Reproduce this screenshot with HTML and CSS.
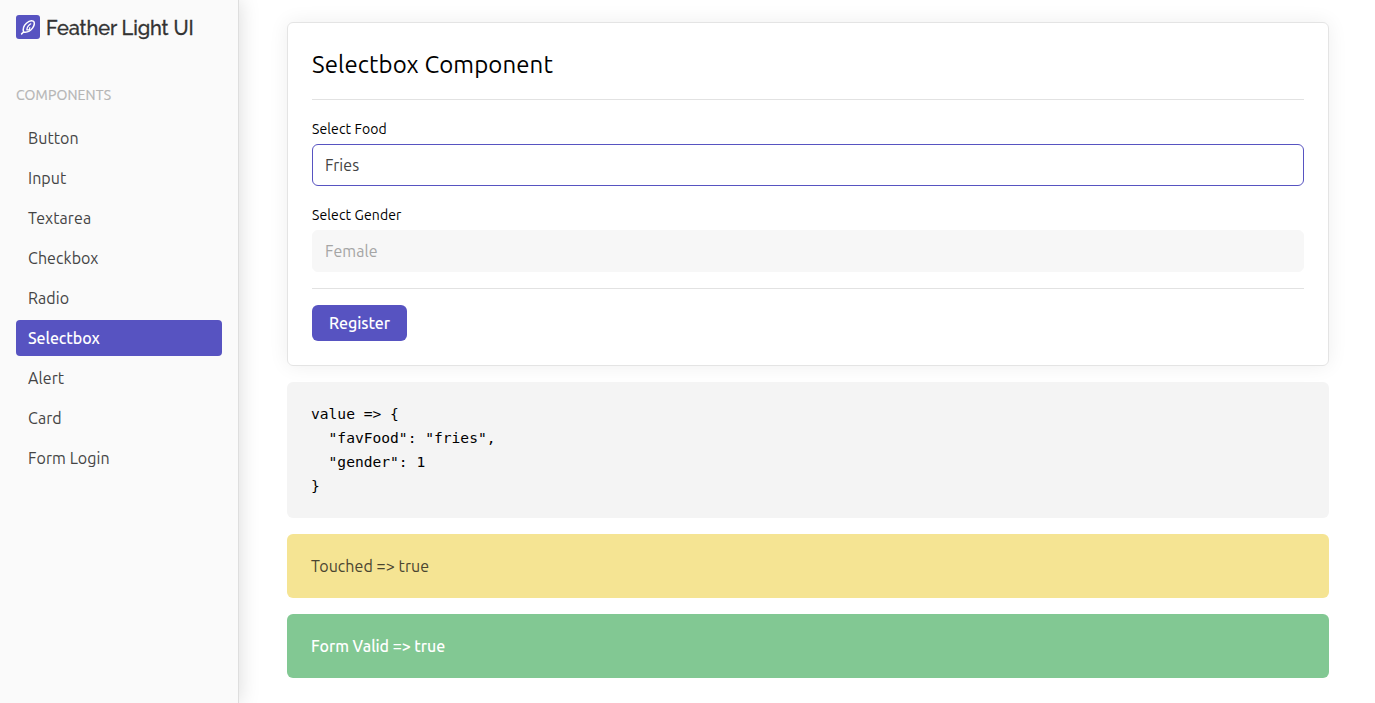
FILE: index.html
```html
<!DOCTYPE html>
<html lang="en">
<head>
<meta charset="utf-8">
<title>Feather Light UI</title>
<link rel="stylesheet" href="styles.css">
</head>
<body>
<div class="app">
  <aside class="sidebar">
    <div class="brand">
      <span class="brand-mark">
        <svg width="24" height="24" viewBox="0 0 24 24" fill="none" stroke="#fff" stroke-width="1.5" stroke-linecap="round" stroke-linejoin="round">
          <path d="M5.6 18.9 7.8 16.8M7.6 17C6.6 13.6 7.8 10.6 10.4 8.2 12.6 6.2 15.4 5.2 17.2 6.1c1.8 1 1.4 4.2-.5 6.8-2.2 3-5.4 4.7-9.1 4.1"/>
          <path stroke-width="1.2" d="M14.8 8.8c-2.4 1.5-3.8 3.6-4 6M11 14.9h2.4l.4-2.4"/>
        </svg>
      </span>
      <span class="brand-name">Feather Light UI</span>
    </div>
    <div class="nav-title">COMPONENTS</div>
    <nav class="nav">
      <a class="nav-item">Button</a>
      <a class="nav-item">Input</a>
      <a class="nav-item">Textarea</a>
      <a class="nav-item">Checkbox</a>
      <a class="nav-item">Radio</a>
      <a class="nav-item active">Selectbox</a>
      <a class="nav-item">Alert</a>
      <a class="nav-item">Card</a>
      <a class="nav-item">Form Login</a>
    </nav>
  </aside>
  <main class="content">
    <section class="card">
      <h1 class="card-title">Selectbox Component</h1>
      <div class="fields">
        <label class="label">Select Food</label>
        <div class="select focused">Fries</div>
        <label class="label">Select Gender</label>
        <div class="select disabled">Female</div>
      </div>
      <button class="btn">Register</button>
    </section>
    <pre class="code">value =&gt; {
  "favFood": "fries",
  "gender": 1
}</pre>
    <div class="alert warning">Touched =&gt; true</div>
    <div class="alert success">Form Valid =&gt; true</div>
  </main>
</div>
</body>
</html>
```
FILE: styles.css
```css
* { box-sizing: border-box; }
body {
  margin: 0;
  background: #fff;
  color: #000;
  font: 16px/24px Ubuntu, "Noto Sans", sans-serif;
  letter-spacing: .07px;
}
.app { display: flex; height: 703px; overflow: hidden; }
.sidebar {
  flex: none;
  width: 239px;
  padding: 15px 16px;
  background: #fafafa;
  border-right: 1px solid #dedede;
  box-shadow: 0 0 20px rgba(0, 0, 0, .15);
}
.brand { display: flex; align-items: center; gap: 6px; height: 24px; }
.brand-mark { width: 24px; height: 24px; border-radius: 3px; background: #5753c1; }
.brand-mark svg { display: block; }
.brand-name {
  padding-top: 1px;
  font: 500 20px/24px Raleway, Lato, sans-serif;
  letter-spacing: -.1px;
  color: #333;
  white-space: nowrap;
  -webkit-text-stroke: .3px #333;
}
.nav-title { margin-top: 44px; font-size: 14px; color: #b5b5b5; letter-spacing: .15px; -webkit-text-stroke: .2px #b5b5b5; }
.nav { display: flex; flex-direction: column; gap: 4px; margin-top: 13px; }
.nav-item { height: 36px; padding: 6px 12px; border-radius: 4px; color: #444; }
.nav-item.active { background: #5753c1; color: #fff; font-weight: 500; letter-spacing: -.08px; }
.content { flex: 1; display: flex; flex-direction: column; gap: 16px; padding: 22px 46px 25px 48px; }
.card {
  height: 344px;
  padding: 24px;
  border: 1px solid #e4e4e4;
  border-radius: 6px;
  box-shadow: 0 0 20px rgba(0, 0, 0, .07);
}
.card-title { margin: 0; height: 52px; font-size: 24px; line-height: 36px; font-weight: 400; letter-spacing: .1px; }
.fields { border: solid #e2e2e2; border-width: 1px 0; padding: 19px 0 16px; }
.label { display: block; font-size: 14px; line-height: 20px; margin-bottom: 5px; letter-spacing: .12px; }
.select { height: 42px; padding: 8px 12px; border: 1px solid #5753c1; border-radius: 6px; color: #444; }
.focused { margin-bottom: 19px; }
.disabled { background: #f7f7f7; border-color: #f7f7f7; color: #a5a5a5; }
.btn {
  display: block;
  width: 95px;
  height: 36px;
  margin-top: 16px;
  padding: 0;
  border: 0;
  border-radius: 6px;
  background: #5753c1;
  color: #fff;
  font: 500 16px/36px Ubuntu, "Noto Sans", sans-serif;
  letter-spacing: -.06px;
}
.code {
  margin: 0;
  height: 136px;
  padding: 20px 24px;
  border-radius: 6px;
  background: #f4f4f4;
  font: 14.6px/24px Consolas, "DejaVu Sans Mono", monospace;
  letter-spacing: 0;
}
.alert { height: 64px; padding: 20px 24px; border-radius: 6px; }
.warning { background: #f5e493; color: #4a4530; }
.success { background: #82c893; color: #fff; font-weight: 500; letter-spacing: -.06px; }
```
